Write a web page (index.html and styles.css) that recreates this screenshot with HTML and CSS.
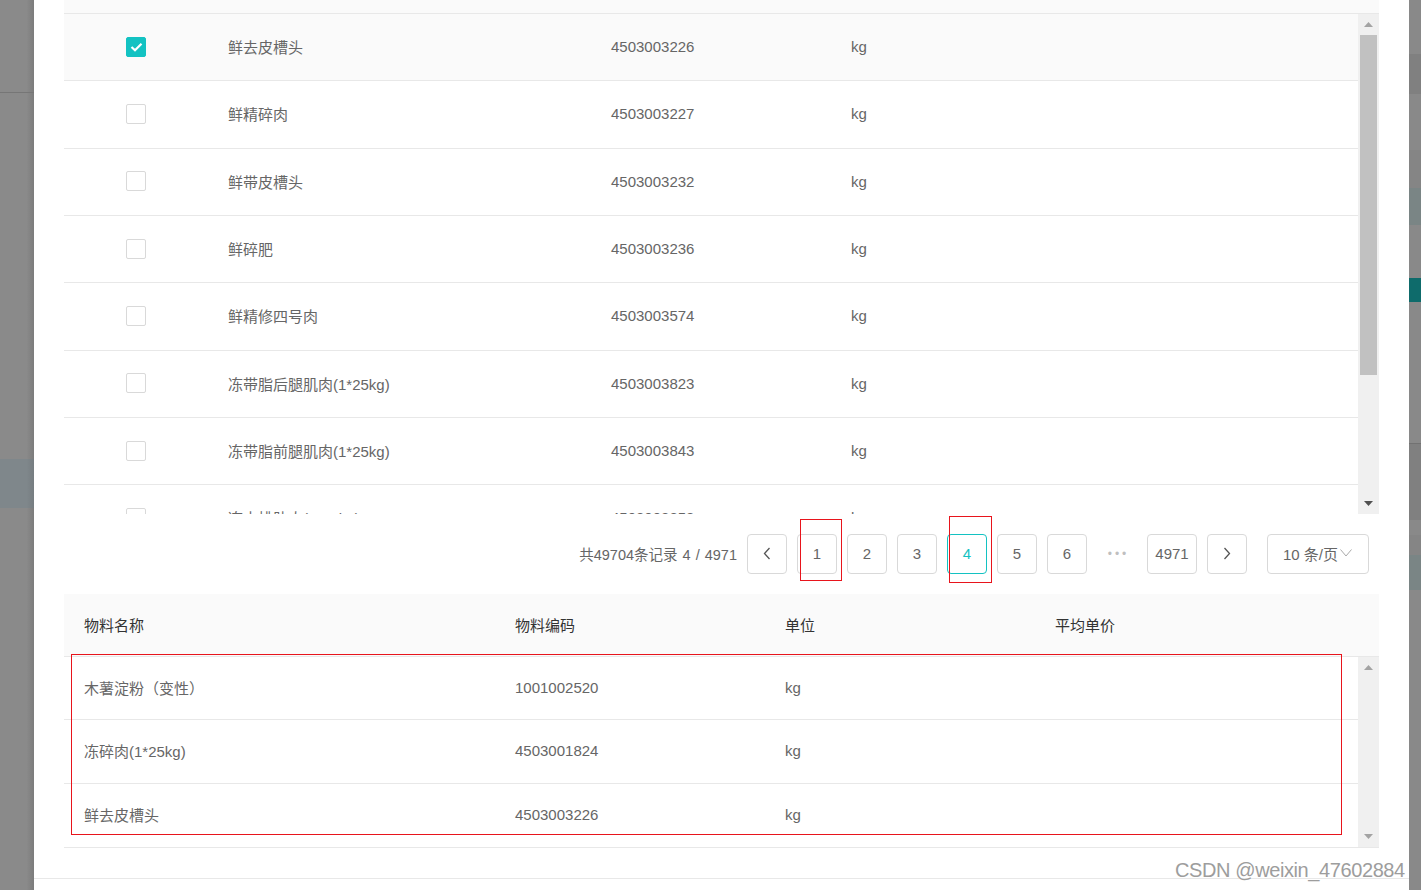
FILE: index.html
```html
<!DOCTYPE html>
<html lang="zh-CN">
<head>
<meta charset="utf-8">
<title>物料选择</title>
<link rel="stylesheet" href="styles.css">
</head>
<body>
<div class="screen">
  <div class="mask-left">
    <div class="ml-top"></div>
    <div class="ml-line"></div>
    <div class="ml-mid"></div>
    <div class="ml-blue"></div>
    <div class="ml-rest"></div>
  </div>

  <div class="modal">
    <div class="modal-body">
      <div class="table t-top">
        <div class="stub"></div>
        <div class="body-wrap">
          <div class="rows">
            <div class="row sel">
              <div class="c-check"><span class="cb on"><svg width="13" height="10" viewBox="0 0 13 10"><polyline points="1.5,5 5,8.3 11.5,1.8" fill="none" stroke="#fff" stroke-width="2.2"/></svg></span></div>
              <div class="c-name">鲜去皮槽头</div><div class="c-code">4503003226</div><div class="c-unit">kg</div>
            </div>
            <div class="row">
              <div class="c-check"><span class="cb"></span></div>
              <div class="c-name">鲜精碎肉</div><div class="c-code">4503003227</div><div class="c-unit">kg</div>
            </div>
            <div class="row">
              <div class="c-check"><span class="cb"></span></div>
              <div class="c-name">鲜带皮槽头</div><div class="c-code">4503003232</div><div class="c-unit">kg</div>
            </div>
            <div class="row">
              <div class="c-check"><span class="cb"></span></div>
              <div class="c-name">鲜碎肥</div><div class="c-code">4503003236</div><div class="c-unit">kg</div>
            </div>
            <div class="row">
              <div class="c-check"><span class="cb"></span></div>
              <div class="c-name">鲜精修四号肉</div><div class="c-code">4503003574</div><div class="c-unit">kg</div>
            </div>
            <div class="row">
              <div class="c-check"><span class="cb"></span></div>
              <div class="c-name">冻带脂后腿肌肉(1*25kg)</div><div class="c-code">4503003823</div><div class="c-unit">kg</div>
            </div>
            <div class="row">
              <div class="c-check"><span class="cb"></span></div>
              <div class="c-name">冻带脂前腿肌肉(1*25kg)</div><div class="c-code">4503003843</div><div class="c-unit">kg</div>
            </div>
            <div class="row">
              <div class="c-check"><span class="cb"></span></div>
              <div class="c-name">冻去排肋肉(1*10kg)</div><div class="c-code">4503003858</div><div class="c-unit">kg</div>
            </div>
          </div>
          <div class="vscroll">
            <div class="sb-btn"><svg width="9" height="5" viewBox="0 0 9 5"><polygon points="0,5 4.5,0 9,5" fill="#a3a3a3"/></svg></div>
            <div class="sb-thumb"></div>
            <div class="sb-fill"></div>
            <div class="sb-btn"><svg width="9" height="5" viewBox="0 0 9 5"><polygon points="0,0 9,0 4.5,5" fill="#505050"/></svg></div>
          </div>
        </div>
      </div>

      <div class="pager">
        <span class="total">共49704条记录 4 / 4971</span>
        <span class="pg"><svg width="8" height="13" viewBox="0 0 8 13"><polyline points="6.5,1 1.5,6.5 6.5,12" fill="none" stroke="#555" stroke-width="1.3"/></svg></span>
        <span class="pg">1</span>
        <span class="pg">2</span>
        <span class="pg">3</span>
        <span class="pg active">4</span>
        <span class="pg">5</span>
        <span class="pg">6</span>
        <span class="pg ell">•••</span>
        <span class="pg wide">4971</span>
        <span class="pg"><svg width="8" height="13" viewBox="0 0 8 13"><polyline points="1.5,1 6.5,6.5 1.5,12" fill="none" stroke="#555" stroke-width="1.3"/></svg></span>
        <span class="select">10 条/页<svg width="12" height="8" viewBox="0 0 12 8"><polyline points="0.5,0.5 6,7 11.5,0.5" fill="none" stroke="#aaa" stroke-width="1"/></svg></span>
      </div>

      <div class="table t-bot">
        <div class="thead">
          <div class="b-name">物料名称</div><div class="b-code">物料编码</div><div class="b-unit">单位</div><div class="b-price">平均单价</div>
        </div>
        <div class="body-wrap">
          <div class="rows">
            <div class="row"><div class="b-name">木薯淀粉（变性）</div><div class="b-code">1001002520</div><div class="b-unit">kg</div><div class="b-price"></div></div>
            <div class="row"><div class="b-name">冻碎肉(1*25kg)</div><div class="b-code">4503001824</div><div class="b-unit">kg</div><div class="b-price"></div></div>
            <div class="row"><div class="b-name">鲜去皮槽头</div><div class="b-code">4503003226</div><div class="b-unit">kg</div><div class="b-price"></div></div>
          </div>
          <div class="vscroll">
            <div class="sb-btn"><svg width="9" height="5" viewBox="0 0 9 5"><polygon points="0,5 4.5,0 9,5" fill="#a3a3a3"/></svg></div>
            <div class="sb-fill"></div>
            <div class="sb-btn"><svg width="9" height="5" viewBox="0 0 9 5"><polygon points="0,0 9,0 4.5,5" fill="#a3a3a3"/></svg></div>
          </div>
        </div>
      </div>
    </div>
    <div class="modal-footer"></div>
  </div>

  <div class="mask-right">
    <div class="mr g" style="height:54px"></div>
    <div class="mr d" style="height:40px"></div>
    <div class="mr g" style="height:56px"></div>
    <div class="mr m" style="height:38px"></div>
    <div class="mr b" style="height:37px"></div>
    <div class="mr g" style="height:53px"></div>
    <div class="mr t" style="height:24px"></div>
    <div class="mr g" style="height:141px"></div>
    <div class="mr d lined" style="height:77px"></div>
    <div class="mr g" style="height:15px"></div>
    <div class="mr m" style="height:20px"></div>
    <div class="mr b" style="height:35px"></div>
    <div class="mr g fill"></div>
  </div>

  <div class="mark mark-1"></div>
  <div class="mark mark-2"></div>
  <div class="mark mark-3"></div>
  <div class="watermark">CSDN @weixin_47602884</div>
</div>
</body>
</html>
```

FILE: styles.css
```css
* { box-sizing: border-box; margin: 0; padding: 0; }
html, body { width: 1421px; height: 890px; overflow: hidden; }
body {
  font-family: "Liberation Sans", "Noto Sans CJK SC", sans-serif;
  font-size: 15px;
  color: #666;
  background: #fff;
}
.screen { position: relative; display: flex; width: 1421px; height: 890px; overflow: hidden; }

/* left mask */
.mask-left {
  width: 34px; flex: none; display: flex; flex-direction: column;
  background: linear-gradient(to right, #8a8a8a 0, #8a8a8a 78%, #7c7c7c 100%);
}
.ml-top { height: 92px; }
.ml-line { height: 1px; background: #767676; }
.ml-mid { height: 366px; }
.ml-blue { height: 49px; background: linear-gradient(to right, #7f878b 0, #7f878b 78%, #767d81 100%); }
.ml-rest { flex: 1; }

/* right mask */
.mask-right { width: 12px; flex: none; display: flex; flex-direction: column; }
.mr.g { background: #898989; }
.mr.d { background: #808080; }
.mr.m { background: #858585; }
.mr.b { background: #7a8585; }
.mr.t { background: #0e6b6b; }
.mr.lined { border-top: 1px solid #727272; }
.mr.fill { flex: 1; }

/* modal */
.modal { width: 1375px; flex: none; display: flex; flex-direction: column; background: #fff; }
.modal-body { padding: 0 30px 30px; }
.modal-footer { flex: 1; border-top: 1px solid #e8e8e8; }

.body-wrap { display: flex; }
.rows { flex: 1; overflow: hidden; }
.row { display: flex; align-items: center; border-bottom: 1px solid #e8e8e8; padding-bottom: 1px; }

/* top table */
.t-top .stub { height: 14px; background: #fafafa; border-bottom: 1px solid #e8e8e8; }
.t-top .body-wrap { height: 500px; }
.t-top .row { height: 67.33px; flex: none; }
.row.sel { background: #fafafa; }
.c-check { width: 144px; display: flex; justify-content: center; }
.c-name { width: 383px; padding-left: 20px; }
.c-code { width: 240px; padding-left: 20px; }
.c-unit { padding-left: 20px; }

.cb {
  width: 20px; height: 20px; border: 1px solid #d9d9d9; border-radius: 2px;
  background: #fff; display: flex; align-items: center; justify-content: center;
}
.cb.on { background: #13c2c2; border-color: #13c2c2; }

/* scrollbar */
.vscroll { width: 21px; flex: none; background: #f0f0f0; display: flex; flex-direction: column; align-items: center; }
.sb-btn { width: 100%; height: 21px; flex: none; display: flex; align-items: center; justify-content: center; }
.sb-thumb { width: 17px; height: 340px; flex: none; background: #c1c1c1; }
.sb-fill { flex: 1; }

/* pager */
.pager {
  display: flex; justify-content: flex-end; align-items: center;
  height: 40px; margin: 20px 0; padding-right: 10px;
}
.total { font-size: 14.5px; word-spacing: 1px; margin-right: 10px; padding-bottom: 2px; color: #666; }
.pg {
  width: 40px; height: 40px; margin-right: 10px;
  border: 1px solid #d9d9d9; border-radius: 4px;
  display: flex; align-items: center; justify-content: center;
  color: #666; font-size: 15px; padding-bottom: 2px;
}
.pg.wide { width: 50px; }
.pg.active { border-color: #13c2c2; color: #13c2c2; }
.pg.ell { border-color: transparent; color: #bfbfbf; font-size: 12px; letter-spacing: 3px; padding-left: 3px; padding-bottom: 0; }
.select {
  width: 102px; height: 40px; margin-left: 10px;
  border: 1px solid #d9d9d9; border-radius: 4px;
  display: flex; align-items: center; gap: 2px; padding-left: 15px; padding-bottom: 2px;
  color: #666; font-size: 15px;
}

/* bottom table */
.thead {
  display: flex; align-items: center; height: 63px; padding-bottom: 1px;
  background: #fafafa; border-bottom: 1px solid #e8e8e8; color: #333;
}
.b-name { width: 431px; padding-left: 20px; }
.b-code { width: 270px; padding-left: 20px; }
.b-unit { width: 270px; padding-left: 20px; }
.b-price { padding-left: 20px; }
.t-bot .body-wrap { height: 191px; border-bottom: 1px solid #e8e8e8; }
.t-bot .row { height: 63.33px; }
.t-bot .row:last-child { border-bottom: 0; }

/* annotation boxes */
.mark { position: absolute; border: 1px solid #e8141c; }
.mark-1 { left: 800px; top: 519px; width: 42px; height: 62px; }
.mark-2 { left: 949px; top: 516px; width: 43px; height: 67px; }
.mark-3 { left: 71px; top: 654px; width: 1271px; height: 181px; }

.watermark {
  position: absolute; left: 1175px; top: 860px;
  font-family: "Liberation Sans", sans-serif; font-size: 20px; line-height: 20px;
  letter-spacing: -0.4px; color: #9d9d9d; white-space: nowrap;
  text-shadow: 0 0 1px #fff;
}
```
